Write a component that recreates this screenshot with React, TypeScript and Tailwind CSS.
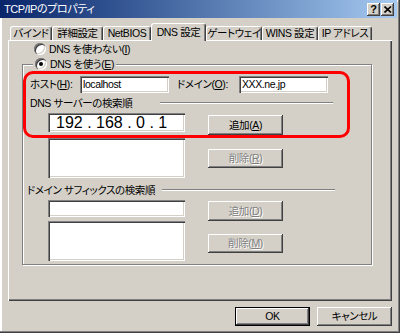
import React from "react";

const raised =
  "bg-[#d4d0c8] shadow-[inset_-1px_-1px_#404040,inset_1px_1px_#ffffff,inset_-2px_-2px_#808080]";
const sunken =
  "bg-white shadow-[inset_1px_1px_#808080,inset_2px_2px_#404040,inset_-1px_-1px_#ffffff,inset_-2px_-2px_#d4d0c8]";

function Btn({
  w,
  h,
  children,
  disabled,
  className = "",
}: {
  w: string;
  h: string;
  children: React.ReactNode;
  disabled?: boolean;
  className?: string;
}) {
  return (
    <div
      className={`${raised} ${w} ${h} ${className} flex items-center justify-center ${
        disabled ? "text-[#808080] [text-shadow:1px_1px_0_#ffffff]" : "text-black"
      }`}
    >
      {children}
    </div>
  );
}

function Radio({ checked }: { checked?: boolean }) {
  return (
    <div className="relative w-[12px] h-[12px] rounded-full bg-white shadow-[inset_1px_1px_#808080,inset_2px_2px_#404040,inset_-1px_-1px_#ffffff,inset_-2px_-2px_#d4d0c8] flex items-center justify-center shrink-0">
      {checked && <div className="w-[4px] h-[4px] rounded-full bg-black" />}
    </div>
  );
}

function Etched({ w }: { w: string }) {
  return <div className={`${w} h-[2px] border-t border-t-[#808080] border-b border-b-white shrink-0`} />;
}

function Tab({ w, label, selected }: { w: string; label: string; selected?: boolean }) {
  if (selected) {
    return (
      <div
        className={`${w} relative z-10 mb-[-1px] h-[18px] rounded-t-[3px] border-t border-l border-white border-r border-r-[#404040] bg-[#d4d0c8] shadow-[inset_-1px_0_#808080] flex items-start justify-center pt-[3px]`}
      >
        {label}
      </div>
    );
  }
  return (
    <div
      className={`${w} h-[14px] rounded-t-[3px] border-t border-l border-white border-r border-r-[#404040] shadow-[inset_-1px_0_#808080] flex items-center justify-center`}
    >
      {label}
    </div>
  );
}

export default function App() {
  return (
    <div className="relative w-[400px] h-[333px] overflow-hidden whitespace-nowrap bg-[#d4d0c8] font-['Liberation_Sans','Noto_Sans_CJK_JP',sans-serif] text-[10.5px] tracking-[-0.4px] leading-none text-black [font-feature-settings:'palt'] shadow-[inset_-1px_-1px_#404040,inset_-2px_-2px_#808080,inset_2px_2px_#ffffff]">
      {/* Title bar */}
      <div className="flex h-[18px] w-[397px] items-center bg-linear-to-r from-[#0a246a] to-[#a6caf0] pl-[4px] pr-[3px]">
        <span className="text-white text-[11px]">TCP/IPのプロパティ</span>
        <div className="ml-auto flex gap-[1px]">
          <div className={`${raised} w-[13px] h-[13px] flex items-center justify-center font-bold text-[11px]`}>?</div>
          <div className={`${raised} w-[13px] h-[13px] flex items-center justify-center`}>
            <svg width="8" height="7" viewBox="0 0 8 7">
              <path d="M0.5 0.5 L7 6.5 M7 0.5 L0.5 6.5" stroke="#000" strokeWidth="1.6" />
            </svg>
          </div>
        </div>
      </div>

      {/* Tabs */}
      <div className="flex items-end h-[22px] pl-[10px]">
        <Tab w="w-[42px]" label="バインド" />
        <Tab w="w-[51px]" label="詳細設定" />
        <Tab w="w-[48px]" label="NetBIOS" />
        <Tab w="w-[55px]" label="DNS 設定" selected />
        <Tab w="w-[56px]" label="ゲートウェイ" />
        <Tab w="w-[56px]" label="WINS 設定" />
        <Tab w="w-[54px]" label="IP アドレス" />
      </div>

      {/* Panel */}
      <div className="ml-[8px] w-[384px] h-[261px] shadow-[inset_1px_1px_#ffffff,inset_-1px_-1px_#404040,inset_-2px_-2px_#808080] pt-[3px]">
        <div className="flex items-center h-[12px] pl-[26px] gap-[3px]">
          <Radio />
          <span>DNS を使わない(<u>I</u>)</span>
        </div>

        {/* Group box */}
        <div className="relative mt-[9px] ml-[14px] w-[350px] h-[201px] border border-[#808080] shadow-[inset_1px_1px_#ffffff,1px_1px_#ffffff] pt-[11px]">
          <div className="absolute left-[10px] top-[-7px] h-[12px] flex items-center gap-[3px] bg-[#d4d0c8] px-[2px]">
            <Radio checked />
            <span>DNS を使う(<u>E</u>)</span>
          </div>

          {/* Host / Domain */}
          <div className="flex items-center h-[17px] pl-[7px]">
            <span className="w-[50px]">
              ホスト(<u>H</u>):
            </span>
            <div className={`${sunken} w-[89px] h-[17px] flex items-center pl-[3px]`}>localhost</div>
            <span className="ml-[8px] w-[62px]">
              ドメイン(<u>O</u>):
            </span>
            <div className={`${sunken} w-[89px] h-[17px] flex items-center pl-[3px]`}>XXX.ne.jp</div>
          </div>

          {/* DNS server order label */}
          <div className="mt-[4px] flex items-center h-[12px] pl-[7px]">
            <span className="w-[130px]">DNS サーバーの検索順</span>
            <Etched w="w-[173px]" />
          </div>

          {/* DNS server list */}
          <div className="mt-[4px] flex pl-[25px]">
            <div className="w-[137px] flex flex-col">
              <div className={`${sunken} h-[19px] flex items-center pl-[8px] text-[16px] tracking-normal`}>
                192 . 168 . 0 . 1
              </div>
              <div className={`${sunken} mt-[6px] h-[40px]`} />
            </div>
            <div className="ml-[23px] flex flex-col">
              <Btn w="w-[75px]" h="h-[20px]" className="mt-[2px]">
                追加(<u>A</u>)
              </Btn>
              <Btn w="w-[75px]" h="h-[19px]" className="mt-[14px]" disabled>
                削除(<u>R</u>)
              </Btn>
            </div>
          </div>

          {/* Domain suffix label */}
          <div className="mt-[6px] flex items-center h-[12px] pl-[4px]">
            <span className="w-[135px]">ドメイン サフィックスの検索順</span>
            <Etched w="w-[173px]" />
          </div>

          {/* Domain suffix list */}
          <div className="mt-[4px] flex pl-[25px]">
            <div className="w-[137px] flex flex-col">
              <div className={`${sunken} h-[17px]`} />
              <div className={`${sunken} mt-[4px] h-[40px]`} />
            </div>
            <div className="ml-[23px] flex flex-col">
              <Btn w="w-[75px]" h="h-[20px]" className="mt-[1px]" disabled>
                追加(<u>D</u>)
              </Btn>
              <Btn w="w-[75px]" h="h-[19px]" className="mt-[13px]" disabled>
                削除(<u>M</u>)
              </Btn>
            </div>
          </div>
        </div>
      </div>

      {/* Bottom buttons */}
      <div className="mt-[6px] flex justify-end gap-[7px] pr-[8px]">
        <div className="w-[75px] h-[19px] border border-black">
          <Btn w="w-full" h="h-full">OK</Btn>
        </div>
        <Btn w="w-[75px]" h="h-[19px]">キャンセル</Btn>
      </div>

      {/* Red annotation */}
      <div className="absolute left-[23px] top-[71px] w-[327px] h-[67px] border-[3px] border-[#ff0000] rounded-[10px] pointer-events-none" />
    </div>
  );
}
